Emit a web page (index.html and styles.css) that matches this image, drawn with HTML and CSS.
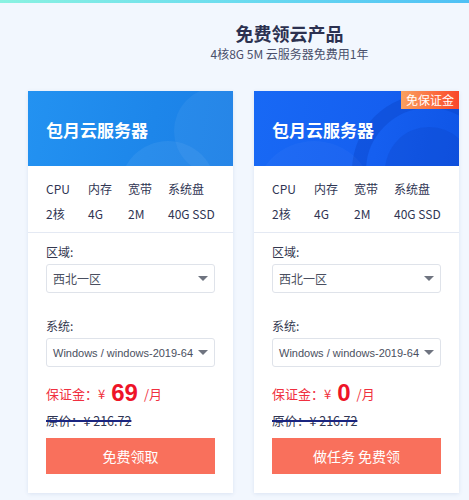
FILE: index.html
```html
<!DOCTYPE html>
<html lang="zh">
<head>
<meta charset="utf-8">
<link rel="stylesheet" href="styles.css">
</head>
<body>
<div class="topbar"></div>
<div class="intro">
  <h1 class="title">免费领云产品</h1>
  <p class="subtitle">4核8G 5M 云服务器免费用1年</p>
</div>
<div class="cards">
  <div class="card">
    <div class="card-head head-a">
      <svg class="deco" viewBox="0 0 205 75" preserveAspectRatio="none">
        <circle cx="190" cy="40" r="44" fill="#ffffff" fill-opacity="0.05"/>
        <circle cx="140" cy="98" r="48" fill="#ffffff" fill-opacity="0.06"/>
      </svg>
      <span class="head-title">包月云服务器</span>
    </div>
    <div class="specs">
      <span>CPU</span><span>内存</span><span>宽带</span><span>系统盘</span>
      <span>2核</span><span>4G</span><span>2M</span><span>40G SSD</span>
    </div>
    <div class="body">
      <div class="label">区域:</div>
      <div class="select"><span class="val">西北一区</span><i class="caret"></i></div>
      <div class="label label-2">系统:</div>
      <div class="select"><span class="val latin">Windows / windows-2019-64</span><i class="caret"></i></div>
      <div class="price">保证金：<span class="yen">¥</span><b class="amount">69</b><span class="unit">/月</span></div>
      <div class="orig">原价：¥ 216.72</div>
      <button class="btn">免费领取</button>
    </div>
  </div>
  <div class="card">
    <div class="card-head head-b">
      <svg class="deco" viewBox="0 0 205 75" preserveAspectRatio="none">
        <circle cx="175" cy="80" r="70" fill="none" stroke="#0a3fc0" stroke-opacity="0.35" stroke-width="14"/>
        <circle cx="175" cy="80" r="44" fill="#0a3fc0" fill-opacity="0.25"/>
        <circle cx="60" cy="110" r="60" fill="#ffffff" fill-opacity="0.03"/>
      </svg>
      <span class="head-title">包月云服务器</span>
      <span class="badge">免保证金</span>
    </div>
    <div class="specs">
      <span>CPU</span><span>内存</span><span>宽带</span><span>系统盘</span>
      <span>2核</span><span>4G</span><span>2M</span><span>40G SSD</span>
    </div>
    <div class="body">
      <div class="label">区域:</div>
      <div class="select"><span class="val">西北一区</span><i class="caret"></i></div>
      <div class="label label-2">系统:</div>
      <div class="select"><span class="val latin">Windows / windows-2019-64</span><i class="caret"></i></div>
      <div class="price">保证金：<span class="yen">¥</span><b class="amount">0</b><span class="unit">/月</span></div>
      <div class="orig">原价：¥ 216.72</div>
      <button class="btn">做任务 免费领</button>
    </div>
  </div>
</div>
</body>
</html>
```
FILE: styles.css
```css
* { box-sizing: border-box; }
html, body { margin: 0; padding: 0; }
body {
  background: #f2f7fe;
  font-family: "Noto Sans CJK SC", "Noto Sans", sans-serif;
  color: #2f3553;
  width: 469px;
  height: 500px;
  overflow: hidden;
}
.topbar {
  height: 3px;
  background: linear-gradient(90deg, #8af2e1 0%, #6cdcef 50%, #4fc0f5 100%);
}
.intro {
  padding: 17px 0 0 110px;
  text-align: center;
}
.title {
  margin: 0;
  font-size: 18px;
  line-height: 26px;
  font-weight: 700;
  color: #2c3150;
}
.subtitle {
  margin: 0;
  font-size: 12px;
  line-height: 16px;
  color: #4a506b;
}
.cards {
  display: flex;
  gap: 21px;
  padding: 29px 0 0 28px;
}
.card {
  width: 205px;
  background: #fff;
  box-shadow: 0 1px 4px rgba(60, 90, 160, 0.12);
}
.card-head {
  position: relative;
  height: 75px;
  overflow: hidden;
  display: flex;
  align-items: center;
  padding: 0 0 0 18px;
}
.head-a { background: linear-gradient(100deg, #2392f1 0%, #1d86ea 60%, #1b7fe6 100%); }
.head-b { background: linear-gradient(100deg, #1869f5 0%, #155ff0 60%, #0f55e6 100%); }
.deco {
  position: absolute;
  left: 0; top: 0;
  width: 100%; height: 100%;
}
.head-title {
  position: relative;
  color: #fff;
  font-size: 17px;
  font-weight: 700;
  margin-top: 1px;
}
.badge {
  position: absolute;
  right: 0; top: 0;
  height: 18px;
  line-height: 18px;
  padding: 0 5px;
  font-size: 12px;
  color: #fff;
  background: linear-gradient(90deg, #f9a160 0%, #fb6a3d 60%, #f9472a 100%);
}
.specs {
  display: grid;
  grid-template-columns: 42px 40px 40px auto;
  grid-auto-rows: 25px;
  align-items: center;
  padding: 10px 0 6px 18px;
  font-size: 12px;
  color: #2f3553;
  border-bottom: 1px solid #e4e9f3;
}
.body {
  padding: 10px 18px 19px;
}
.label {
  font-size: 12px;
  line-height: 18px;
  color: #33384f;
  margin-bottom: 3px;
}
.label-2 { margin-top: 24px; }
.select {
  height: 29px;
  border: 1px solid #dfe3ea;
  border-radius: 3px;
  display: flex;
  align-items: center;
  justify-content: space-between;
  padding: 0 6px 0 6px;
  font-size: 12px;
  color: #4a4f60;
}
.val {
  white-space: nowrap;
}
.latin {
  font-family: "Liberation Sans", "Noto Sans CJK SC", sans-serif;
  font-size: 11px;
}
.caret {
  width: 0; height: 0;
  border-left: 5px solid transparent;
  border-right: 5px solid transparent;
  border-top: 5px solid #6f7480;
  flex: none;
  margin-left: 3px;
}
.price {
  margin-top: 12px;
  height: 28px;
  display: flex;
  align-items: center;
  font-size: 13px;
  color: #f03040;
}
.yen { margin-right: 6px; }
.amount {
  font-family: "Liberation Sans", sans-serif;
  font-size: 24px;
  font-weight: 700;
  color: #ee1428;
  margin-right: 6px;
}
.unit { font-size: 13px; }
.orig {
  margin-top: 5px;
  font-size: 12.5px;
  line-height: 18px;
  color: #2f3553;
  text-decoration: line-through;
  text-decoration-color: #1a2580;
  text-decoration-thickness: 1.5px;
}
.btn {
  display: block;
  width: 100%;
  height: 36px;
  margin-top: 8px;
  border: none;
  background: #f9705c;
  color: #fff;
  font-family: "Noto Sans CJK SC", sans-serif;
  font-size: 14px;
  cursor: pointer;
}
```
